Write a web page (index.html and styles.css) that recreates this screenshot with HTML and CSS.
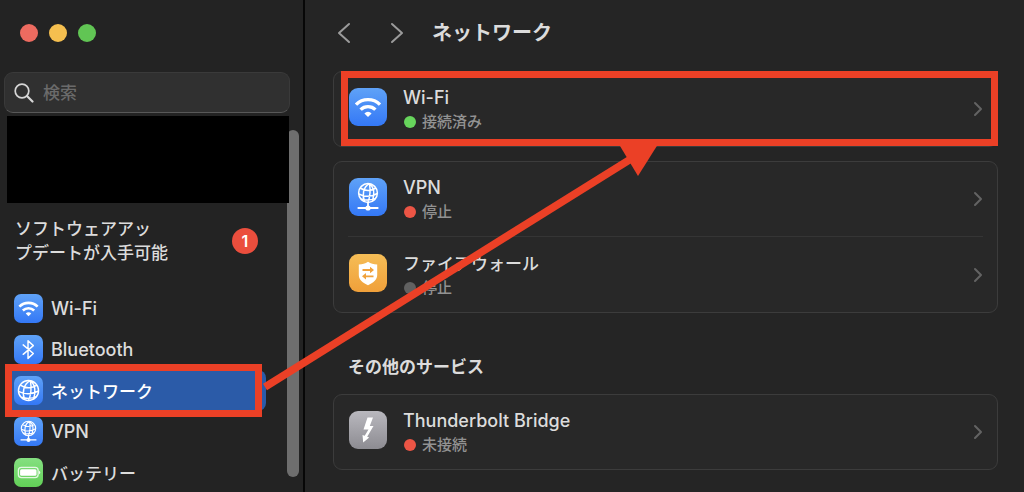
FILE: index.html
```html
<!DOCTYPE html>
<html lang="ja">
<head>
<meta charset="utf-8">
<title>ネットワーク</title>
<link rel="stylesheet" href="styles.css">
</head>
<body>
<svg class="defs" width="0" height="0" aria-hidden="true">
  <symbol id="wifi" viewBox="0 0 38 38">
    <g fill="none" stroke="#fff" stroke-width="3.4">
      <path d="M7 16.6a17 17 0 0 1 24 0"/>
      <path d="M11.6 21.6a10.6 10.6 0 0 1 14.800 0"/>
    </g>
    <path d="M19 29l-3.600-3.600a5 5 0 0 1 7.200 0z" fill="#fff"/>
  </symbol>
  <symbol id="globe" viewBox="0 0 30 30">
    <g fill="none" stroke="#fff" stroke-width="1.5">
      <circle cx="15" cy="15" r="10.400"/>
      <path d="M17 4.800C10 8 8 17 11 24.600M17 4.800c1 6 1 14-2 20.500M17 4.800c5 4 6 12 3 19.300M6.500 9.500c5 3.500 12 3.500 17.500 0M4.600 16c6 3 14 3 20.800-.5M7.500 22c5 1.500 11 1.500 16-.6"/>
    </g>
  </symbol>
  <symbol id="vpn" viewBox="0 0 38 38">
    <g fill="none" stroke="#fff" stroke-width="1.500">
      <circle cx="19" cy="15" r="9.400"/>
      <path d="M20.500 5.700C14 9 13 17 15.500 23.800M20.500 5.700c1 6 1 12-1.500 18.500M20.500 5.700c5 4 5 11 3 17M11 10c5 3 11 3 16 0M9.700 16c6 3 13 3 18.600-.5M12 21c5 1.400 9 1.400 14-.4"/>
      <path d="M19 24v6M8.600 30h20.800" stroke-width="1.800"/>
    </g>
    <circle cx="19" cy="30" r="2.600" fill="#fff"/>
  </symbol>
  <symbol id="bluetooth" viewBox="0 0 30 30">
    <path d="M9.500 10.200l10.500 9-5.500 5V6l5.500 5-10.500 9" fill="none" stroke="#fff" stroke-width="1.500" stroke-linejoin="round" stroke-linecap="round"/>
  </symbol>
  <symbol id="battery" viewBox="0 0 30 30">
    <rect x="4.500" y="9.800" width="20.500" height="10.400" rx="3.200" fill="none" stroke="#fff" stroke-opacity=".8" stroke-width="1.300"/>
    <rect x="6.300" y="11.600" width="17" height="6.800" rx="1.600" fill="#fff"/>
    <path d="M26 13.200c1.600.6 1.600 3 0 3.600z" fill="#fff"/>
  </symbol>
  <symbol id="firewall" viewBox="0 0 38 38">
    <path d="M19 7.800c2.800 2 5.500 2.600 9.200 2.800V21c0 5-4 7.800-9.200 10.200C13.800 28.800 9.800 26 9.800 21V10.600c3.700-.2 6.400-.8 9.200-2.800z" fill="#fff"/>
    <g fill="none" stroke="#f0a23c" stroke-width="1.800">
      <path d="M13.500 16h9M24.500 22.300h-9"/>
    </g>
    <path d="M21 12.800l4 3.200-4 3.200zM17 19.100l-4 3.200 4 3.200z" fill="#f0a23c"/>
  </symbol>
  <symbol id="bolt" viewBox="0 0 38 38">
    <path d="M18.500 6.500h5.500L20.800 15h3.700l-6.300 10.700 2 .8-6 5-.7-7.500 2.200.7 3.800-6.200h-5z" fill="#fff"/>
  </symbol>
  <symbol id="next" viewBox="0 0 10 16">
    <path d="M2 2l6 6-6 6" fill="none" stroke="currentColor" stroke-width="2" stroke-linecap="round" stroke-linejoin="round"/>
  </symbol>
</svg>

<div class="window">
  <aside class="sidebar">
    <div class="lights">
      <button class="light close" aria-label="閉じる"></button>
      <button class="light minimize" aria-label="しまう"></button>
      <button class="light zoom" aria-label="拡大"></button>
    </div>
    <label class="search">
      <svg width="20" height="20" viewBox="0 0 20 20" aria-hidden="true"><circle cx="8" cy="8" r="6.800" fill="none" stroke="#d6d6d6" stroke-width="1.700"/><path d="M13 13l5.500 5.500" stroke="#d6d6d6" stroke-width="2.200" stroke-linecap="round"/></svg>
      <input type="text" placeholder="検索" aria-label="検索">
    </label>
    <div class="scroller">
      <div class="account"></div>
      <a class="update" href="#"><span>ソフトウェアアッ<br>プデートが入手可能</span><span class="badge">1</span></a>
      <nav class="menu">
        <a class="item" href="#"><svg class="icon blue"><use href="#wifi"/></svg>Wi-Fi</a>
        <a class="item" href="#"><svg class="icon blue"><use href="#bluetooth"/></svg>Bluetooth</a>
        <a class="item selected kana" href="#"><svg class="icon blue"><use href="#globe"/></svg>ネットワーク</a>
        <a class="item" href="#"><svg class="icon blue"><use href="#vpn"/></svg>VPN</a>
        <a class="item kana" href="#"><svg class="icon green"><use href="#battery"/></svg>バッテリー</a>
      </nav>
      <div class="scrollbar"></div>
    </div>
  </aside>

  <main class="content">
    <header class="toolbar">
      <button class="nav" aria-label="戻る"><svg width="14" height="22" viewBox="0 0 14 22"><path d="M12 2L2 11l10 9" fill="none" stroke="currentColor" stroke-width="2" stroke-linecap="round" stroke-linejoin="round"/></svg></button>
      <button class="nav" aria-label="進む"><svg width="14" height="22" viewBox="0 0 14 22"><path d="M2 2l10 9-10 9" fill="none" stroke="currentColor" stroke-width="2" stroke-linecap="round" stroke-linejoin="round"/></svg></button>
      <h1>ネットワーク</h1>
    </header>

    <section class="card marked">
      <a class="row" href="#">
        <svg class="icon large blue"><use href="#wifi"/></svg>
        <span class="label"><span class="name">Wi-Fi</span><span class="status"><i class="dot on"></i>接続済み</span></span>
        <svg class="chevron"><use href="#next"/></svg>
      </a>
    </section>

    <section class="card">
      <a class="row" href="#">
        <svg class="icon large blue"><use href="#vpn"/></svg>
        <span class="label"><span class="name">VPN</span><span class="status"><i class="dot off"></i>停止</span></span>
        <svg class="chevron"><use href="#next"/></svg>
      </a>
      <a class="row" href="#">
        <svg class="icon large orange"><use href="#firewall"/></svg>
        <span class="label"><span class="name kana">ファイアウォール</span><span class="status"><i class="dot"></i>停止</span></span>
        <svg class="chevron"><use href="#next"/></svg>
      </a>
    </section>

    <h2>その他のサービス</h2>
    <section class="card">
      <a class="row" href="#">
        <svg class="icon large gray"><use href="#bolt"/></svg>
        <span class="label"><span class="name">Thunderbolt Bridge</span><span class="status"><i class="dot off"></i>未接続</span></span>
        <svg class="chevron"><use href="#next"/></svg>
      </a>
    </section>
  </main>

  <svg class="arrow" width="700" height="400" aria-hidden="true">
    <path d="M265 387L634 157" stroke="#eb4026" stroke-width="7.500"/>
    <path d="M638 176l-21-35h43z" fill="#eb4026"/>
  </svg>
</div>
</body>
</html>
```
FILE: styles.css
```css
* { box-sizing: border-box; }

body {
  margin: 0;
  background: #252525;
  color: #dcdcdc;
  font-family: Inter, "Noto Sans CJK JP", sans-serif;
  font-size: 18px;
  font-weight: 500;
}

a { color: inherit; text-decoration: none; }
button { padding: 0; border: 0; background: none; color: inherit; }
.defs { position: absolute; }

.window {
  position: relative;
  display: grid;
  grid-template-columns: 305px 1fr;
  height: 100vh;
  overflow: hidden;
}

.sidebar {
  display: flex;
  flex-direction: column;
  min-height: 0;
  background: #232323;
  border-right: 2px solid #070707;
}

.lights { display: flex; flex: none; gap: 11px; padding: 24px 20px 30px; }
.light { width: 18px; height: 18px; border-radius: 50%; }
.close { background: #ed6b60; }
.minimize { background: #f5bf4f; }
.zoom { background: #61c554; }

.search {
  display: flex;
  flex: none;
  align-items: center;
  gap: 9px;
  height: 41px;
  margin: 0 13px 3px 4px;
  padding: 0 9px;
  background: #303030;
  border: 1px solid #3a3a3a;
  border-bottom-color: #585858;
  border-radius: 9px;
}
.search input {
  flex: 1;
  min-width: 0;
  padding: 0;
  border: 0;
  outline: 0;
  background: none;
  color: #dfdfdf;
  font: inherit;
  font-size: 17px;
}
.search input::placeholder { color: #6b6b6b; opacity: 1; }

.scroller { position: relative; flex: 1; min-height: 0; }
.account {
  position: relative;
  z-index: 1;
  height: 87px;
  margin: 0 14px 0 7px;
  background: #000;
}
.scrollbar {
  position: absolute;
  top: 14px;
  right: 4px;
  bottom: 15px;
  width: 12px;
  border-radius: 6px;
  background: #6e6e6e;
}
.update {
  display: flex;
  align-items: center;
  justify-content: space-between;
  padding: 14px 45px 23px 15px;
  font-size: 17px;
  line-height: 24px;
}
.badge {
  width: 26px;
  height: 26px;
  border-radius: 50%;
  background: #eb4e3d;
  color: #fff;
  font-size: 16px;
  font-weight: 600;
  line-height: 26px;
  text-align: center;
}

.menu { margin: 0 37px 0 5px; }
.item {
  position: relative;
  display: flex;
  align-items: center;
  gap: 8px;
  height: 41px;
  padding-left: 9px;
  border-radius: 8px;
}
.kana { font-size: 17px; }
.selected { background: #2b5ba8; color: #fff; }
.selected::after {
  content: "";
  position: absolute;
  inset: -6px 4px -6px 0;
  border: 7px solid #eb4026;
}

.icon { flex: none; width: 29px; height: 29px; border-radius: 7px; }
.large { width: 38px; height: 38px; border-radius: 9px; }
.blue { background: linear-gradient(#5fa2f7, #3478f6); }
.green { background: linear-gradient(#85e081, #62cf57); }
.orange { background: linear-gradient(#f5bd56, #f0a03a); }
.gray { background: linear-gradient(#b9b8be, #8d8c92); }

.content { min-width: 0; padding: 0 26px 0 28px; }
.toolbar { display: flex; align-items: center; height: 65px; margin-bottom: 6px; padding-left: 4px; }
.nav { display: flex; width: 14px; height: 22px; margin-right: 39px; color: #9b9b9b; }
.nav + .nav { margin-right: 28px; }
h1 { margin: 0; font-size: 20px; font-weight: 700; line-height: 28px; }
h2 { margin: 39px 0 12px 15px; font-size: 17px; font-weight: 700; line-height: 30px; }

.card {
  position: relative;
  margin-bottom: 14px;
  padding: 0 14px;
  background: #282828;
  border: 1px solid #3c3c3c;
  border-radius: 9px;
}
.marked::after {
  content: "";
  position: absolute;
  inset: -1px -1px 0 7px;
  border: 7px solid #eb4026;
}
.row { display: flex; align-items: center; height: 74px; }
.row + .row { height: 76px; border-top: 1px solid #353535; }
.row .icon { margin: 0 16px 4px 1px; }
.label { flex: 1; padding-top: 2px; line-height: 24px; }
.name, .status { display: flex; align-items: center; height: 24px; }
.status { gap: 6px; color: #929292; font-size: 15px; }
.dot { width: 12px; height: 12px; margin-left: 1px; border-radius: 50%; background: #616161; }
.on { background: #67d55c; }
.off { background: #ec5545; }
.chevron { width: 10px; height: 16px; color: #636363; }

.arrow { position: absolute; top: 0; left: 0; pointer-events: none; }
```
